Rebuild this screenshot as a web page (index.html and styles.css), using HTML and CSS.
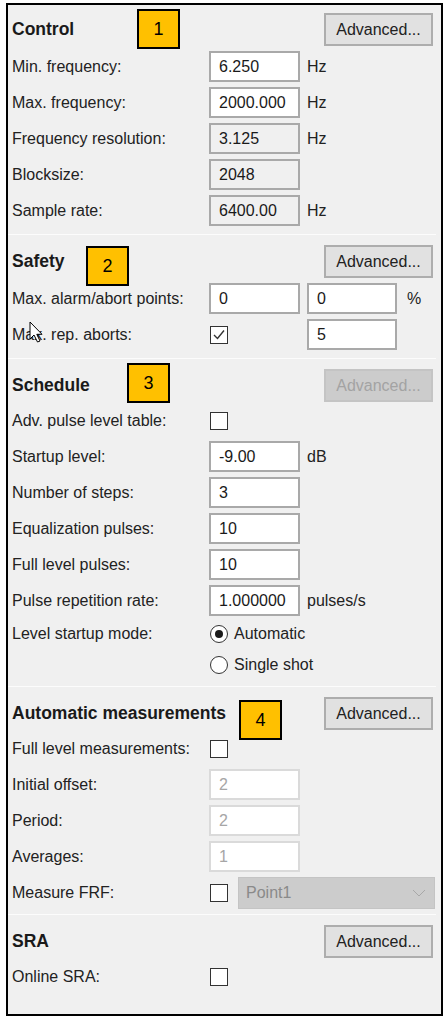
FILE: index.html
```html
<!DOCTYPE html>
<html>
<head>
<meta charset="utf-8">
<link rel="stylesheet" href="styles.css">
</head>
<body>
<div class="panel">
  <section class="sec sec-first">
    <div class="head"><span class="title">Control</span><span class="badge b1">1</span><button class="btn">Advanced...</button></div>
    <div class="row"><span class="lbl">Min. frequency:</span><span class="field">6.250</span><span class="unit">Hz</span></div>
    <div class="row"><span class="lbl">Max. frequency:</span><span class="field">2000.000</span><span class="unit">Hz</span></div>
    <div class="row"><span class="lbl">Frequency resolution:</span><span class="field ro">3.125</span><span class="unit">Hz</span></div>
    <div class="row"><span class="lbl">Blocksize:</span><span class="field ro">2048</span></div>
    <div class="row"><span class="lbl">Sample rate:</span><span class="field ro">6400.00</span><span class="unit">Hz</span></div>
  </section>
  <div class="sep"></div>
  <section class="sec">
    <div class="head"><span class="title">Safety</span><span class="badge b2">2</span><button class="btn">Advanced...</button></div>
    <div class="row"><span class="lbl">Max. alarm/abort points:</span><span class="field">0</span><span class="field field2">0</span><span class="pct">%</span></div>
    <div class="row"><span class="lbl">Max. rep. aborts:</span><span class="cell"><span class="chk"><svg viewBox="0 0 16 16" width="16" height="16"><polyline points="3,8 6.5,11.5 13,3.5" fill="none" stroke="#333" stroke-width="1.4"/></svg></span></span><span class="field field2">5</span></div>
    <svg class="cursor" width="15" height="23" viewBox="0 0 15 23"><path d="M1 1 L1 18 L5 14 L8.5 21 L11 20 L7.8 13.3 L13 13.3 Z" fill="#fff" stroke="#000" stroke-width="1" stroke-linejoin="round"/></svg>
  </section>
  <div class="sep"></div>
  <section class="sec tight">
    <div class="head"><span class="title">Schedule</span><span class="badge b3">3</span><button class="btn btn-dis">Advanced...</button></div>
    <div class="row"><span class="lbl">Adv. pulse level table:</span><span class="cell"><span class="chk"></span></span></div>
    <div class="row"><span class="lbl">Startup level:</span><span class="field">-9.00</span><span class="unit">dB</span></div>
    <div class="row"><span class="lbl">Number of steps:</span><span class="field">3</span></div>
    <div class="row"><span class="lbl">Equalization pulses:</span><span class="field">10</span></div>
    <div class="row"><span class="lbl">Full level pulses:</span><span class="field">10</span></div>
    <div class="row"><span class="lbl">Pulse repetition rate:</span><span class="field">1.000000</span><span class="unit">pulses/s</span></div>
    <div class="row row-radio"><span class="lbl">Level startup mode:</span><span class="radio on"></span><span class="rlbl">Automatic</span></div>
    <div class="row row-radio"><span class="lbl"></span><span class="radio"></span><span class="rlbl">Single shot</span></div>
  </section>
  <div class="sep"></div>
  <section class="sec tight sec-auto">
    <div class="head"><span class="title">Automatic measurements</span><span class="badge b4">4</span><button class="btn">Advanced...</button></div>
    <div class="row"><span class="lbl">Full level measurements:</span><span class="cell"><span class="chk"></span></span></div>
    <div class="row"><span class="lbl">Initial offset:</span><span class="field dis">2</span></div>
    <div class="row"><span class="lbl">Period:</span><span class="field dis">2</span></div>
    <div class="row"><span class="lbl">Averages:</span><span class="field dis">1</span></div>
    <div class="row"><span class="lbl">Measure FRF:</span><span class="chk"></span><span class="combo"><span class="combo-text">Point1</span><svg class="chev" width="14" height="8" viewBox="0 0 14 8"><polyline points="1,1 7,7 13,1" fill="none" stroke="#a8a8a8" stroke-width="1"/></svg></span></div>
  </section>
  <div class="sep"></div>
  <section class="sec tight">
    <div class="head"><span class="title">SRA</span><button class="btn">Advanced...</button></div>
    <div class="row"><span class="lbl">Online SRA:</span><span class="cell"><span class="chk"></span></span></div>
  </section>
</div>
</body>
</html>
```

FILE: styles.css
```css
html, body {
  margin: 0;
  padding: 0;
  background: #ffffff;
}

body {
  font-family: "Liberation Sans", Arial, sans-serif;
  font-size: 16px;
  color: #222222;
}

.panel {
  margin: 3px 0 0 6px;
  width: 437px;
  height: 1013px;
  box-sizing: border-box;
  border: 2px solid #000;
  background: #f0f0f0;
}

.sec {
  position: relative;
  display: flex;
  flex-direction: column;
  gap: 5px;
  padding: 10px 8px 8px 4px;
}

.sec-first {
  padding-top: 8px;
}

.sec-auto {
  padding-bottom: 6px;
}

.tight .head {
  margin-bottom: -2px;
}

.sep {
  height: 1px;
  margin-right: 5px;
  background: #fcfcfc;
}

.head {
  position: relative;
  display: flex;
  align-items: center;
  height: 33px;
}

.title {
  font-weight: bold;
  font-size: 17.5px;
  color: #1a1a1a;
}

.btn {
  margin-left: auto;
  width: 109px;
  height: 33px;
  padding: 0;
  box-sizing: border-box;
  border: 2px solid #adadad;
  background: #e1e1e1;
  font-family: "Liberation Sans", Arial, sans-serif;
  font-size: 16px;
  color: #222222;
}

.btn-dis {
  border-color: #c4c4c4;
  background: #cccccc;
  color: #a3a3a3;
}

.badge {
  position: absolute;
  width: 43px;
  height: 40px;
  box-sizing: border-box;
  border: 2px solid #000;
  background: #ffc000;
  display: flex;
  align-items: center;
  justify-content: center;
  font-size: 18px;
  font-weight: normal;
  color: #000;
}

.b1 { left: 125px; top: -4px; }
.b2 { left: 74px; top: 1px; }
.b3 { left: 115px; top: -6px; }
.b4 { left: 227px; top: 3px; }

.row {
  display: flex;
  align-items: center;
  height: 31px;
}

.row-radio {
  height: 26px;
}

.lbl {
  flex: none;
  width: 197px;
  white-space: nowrap;
}

.field {
  flex: none;
  width: 91px;
  height: 31px;
  box-sizing: border-box;
  border: 2px solid #a9a9a9;
  background: #ffffff;
  padding-left: 8px;
  display: flex;
  align-items: center;
  color: #1a1a1a;
}

.field.ro {
  background: #f0f0f0;
}

.field.dis {
  border-color: #dadada;
  color: #a6a6a6;
}

.field2 {
  width: 90px;
  margin-left: 7px;
}

.unit {
  margin-left: 7px;
}

.pct {
  margin-left: 10px;
}

.cell {
  flex: none;
  width: 91px;
  display: flex;
  align-items: center;
}

.chk {
  flex: none;
  width: 18px;
  height: 18px;
  margin-left: 1px;
  box-sizing: border-box;
  border: 1px solid #333;
  background: #fff;
  display: flex;
  align-items: center;
  justify-content: center;
}

.radio {
  flex: none;
  width: 18px;
  height: 18px;
  margin-left: 1px;
  box-sizing: border-box;
  border: 1px solid #333;
  border-radius: 50%;
  background: #fff;
  display: flex;
  align-items: center;
  justify-content: center;
}

.radio.on::after {
  content: "";
  width: 8px;
  height: 8px;
  border-radius: 50%;
  background: #1a1a1a;
}

.rlbl {
  margin-left: 6px;
}

.combo {
  flex: none;
  margin-left: 10px;
  width: 197px;
  height: 32px;
  box-sizing: border-box;
  border: 1px solid #c4c4c4;
  background: #cccccc;
  display: flex;
  align-items: center;
  padding: 0 8px 0 7px;
  color: #8a8a8a;
}

.combo-text {
  flex: 1;
}

.cursor {
  position: absolute;
  left: 21px;
  top: 86px;
}
```
